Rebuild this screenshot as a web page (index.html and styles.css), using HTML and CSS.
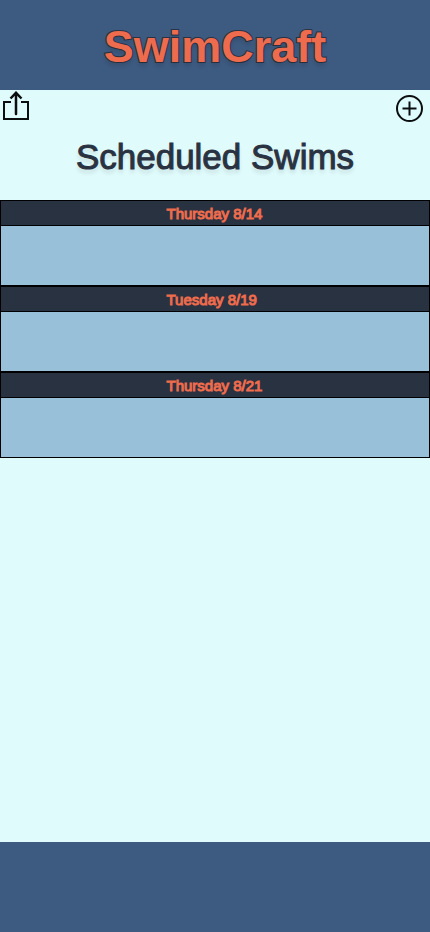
FILE: index.html
```html
<!DOCTYPE html>
<html lang="en">
<head>
<meta charset="utf-8">
<meta name="viewport" content="width=device-width, initial-scale=1">
<title>SwimCraft</title>
<link rel="stylesheet" href="styles.css">
</head>
<body>
<header class="site-header"><h1 class="brand">SwimCraft</h1></header>
<main class="content">
  <div class="toolbar">
    <button class="icon-button" type="button" aria-label="Share">
      <svg width="32" height="36" viewBox="0 0 32 36" fill="none" stroke="#0b0f10" stroke-width="2">
        <path d="M11 12H4v17h24V12h-7"/>
        <path d="M16 24V3" stroke-width="2.5" stroke-linecap="round"/>
        <path d="M10.500 8.500L16 2.800l5.500 5.700" stroke-width="2.500"/>
      </svg>
    </button>
    <button class="icon-button" type="button" aria-label="Add swim">
      <svg width="36" height="36" viewBox="0 0 36 36" fill="none" stroke="#0b0f10" stroke-width="2">
        <circle cx="15.500" cy="18.500" r="12.500"/>
        <path d="M15.500 11.500v14M8.500 18.500h14"/>
      </svg>
    </button>
  </div>
  <h2 class="page-title">Scheduled Swims</h2>
  <section class="swims">
    <article class="swim"><h3 class="swim-head"><span class="swim-date">Thursday 8/14</span></h3><div class="swim-body"></div></article>
    <article class="swim"><h3 class="swim-head"><span class="swim-date">Tuesday 8/19</span></h3><div class="swim-body"></div></article>
    <article class="swim"><h3 class="swim-head"><span class="swim-date">Thursday 8/21</span></h3><div class="swim-body"></div></article>
  </section>
</main>
<footer class="site-footer"></footer>
</body>
</html>
```
FILE: styles.css
```css
* {
  box-sizing: border-box;
}

body {
  margin: 0;
  min-height: 100vh;
  display: flex;
  flex-direction: column;
  background: #e0fbfc;
  color: #293241;
  font-family: "Liberation Sans", Arial, sans-serif;
}

h1, h2, h3 {
  margin: 0;
}

.site-header,
.site-footer {
  min-height: 90px;
  background: #3d5a80;
}

.site-header {
  display: flex;
  align-items: center;
  justify-content: center;
}

.brand {
  padding-top: 4px;
  color: #ee6c4d;
  font-size: 45px;
  line-height: 52px;
  -webkit-text-stroke: 2px #293241;
  paint-order: stroke fill;
  text-shadow: 0 4px 4px rgba(0, 0, 0, 0.12);
}

.content {
  flex: 1;
}

.toolbar {
  display: flex;
  justify-content: space-between;
  height: 36px;
}

.icon-button {
  padding: 0;
  border: 0;
  background: none;
}

.icon-button svg {
  display: block;
}

.page-title {
  padding: 9px 0 21px;
  font-size: 35px;
  font-weight: 400;
  line-height: 44px;
  text-align: center;
  -webkit-text-stroke: 1px #293241;
  text-shadow: 0 4px 4px rgba(0, 0, 0, 0.12);
}

.swim {
  border: 1px solid #000;
  background: #98c1d9;
}

.swim-head {
  display: flex;
  justify-content: center;
  padding-top: 2px;
  border-bottom: 1px solid #000;
  background: #293241;
  color: #ee6c4d;
  font-size: 15px;
  font-weight: 400;
  line-height: 22px;
  -webkit-text-stroke: 1px #ee6c4d;
}

.swim-date {
  min-width: 97px;
}

.swim-body {
  height: 59px;
}
```
